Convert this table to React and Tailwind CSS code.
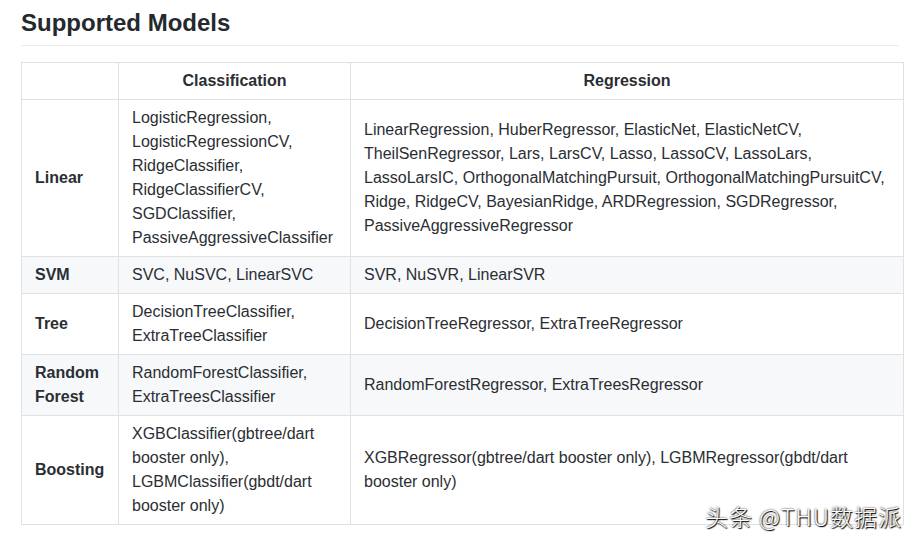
const rows = [
  {
    name: 'Linear',
    cls: [
      'LogisticRegression,',
      'LogisticRegressionCV,',
      'RidgeClassifier,',
      'RidgeClassifierCV,',
      'SGDClassifier,',
      'PassiveAggressiveClassifier',
    ],
    reg: 'LinearRegression, HuberRegressor, ElasticNet, ElasticNetCV, TheilSenRegressor, Lars, LarsCV, Lasso, LassoCV, LassoLars, LassoLarsIC, OrthogonalMatchingPursuit, OrthogonalMatchingPursuitCV, Ridge, RidgeCV, BayesianRidge, ARDRegression, SGDRegressor, PassiveAggressiveRegressor',
  },
  { name: 'SVM', cls: ['SVC, NuSVC, LinearSVC'], reg: 'SVR, NuSVR, LinearSVR' },
  {
    name: 'Tree',
    cls: ['DecisionTreeClassifier,', 'ExtraTreeClassifier'],
    reg: 'DecisionTreeRegressor, ExtraTreeRegressor',
  },
  {
    name: 'Random Forest',
    cls: ['RandomForestClassifier,', 'ExtraTreesClassifier'],
    reg: 'RandomForestRegressor, ExtraTreesRegressor',
  },
  {
    name: 'Boosting',
    cls: ['XGBClassifier(gbtree/dart', 'booster only),', 'LGBMClassifier(gbdt/dart', 'booster only)'],
    reg: 'XGBRegressor(gbtree/dart booster only), LGBMRegressor(gbdt/dart booster only)',
  },
]

export default function App() {
  const cell = 'border border-[#dfe2e5] px-[13px] py-[6px] align-middle'

  return (
    <div className="relative w-[922px] h-[545px] overflow-hidden bg-white text-[#2a2e33] font-['Liberation_Sans',Arial,sans-serif]">
      <div className="px-[21px] pt-[8px]">
        <h2 className="text-[24px] leading-[30px] font-bold pb-[7px] border-b border-[#eaecef] mr-[2px] text-[#24292e]">
          Supported Models
        </h2>
        <table className="mt-[16px] border-collapse table-fixed w-[882px] text-[16px] leading-[24px]">
          <colgroup>
            <col className="w-[97px]" />
            <col className="w-[232px]" />
            <col className="w-[553px]" />
          </colgroup>
          <thead>
            <tr className="bg-white">
              <th className={cell}></th>
              <th className={cell + ' text-center font-bold'}>Classification</th>
              <th className={cell + ' text-center font-bold'}>Regression</th>
            </tr>
          </thead>
          <tbody>
            {rows.map((r, idx) => (
              <tr key={r.name} className={idx % 2 == 1 ? 'bg-[#f6f8fa]' : 'bg-white'}>
                <td className={cell + ' font-bold text-left'}>{r.name}</td>
                <td className={cell}>
                  {r.cls.map((line) => (
                    <div key={line}>{line}</div>
                  ))}
                </td>
                <td className={cell}>{r.reg}</td>
              </tr>
            ))}
          </tbody>
        </table>
      </div>

      {/* watermark */}
      <div className="absolute left-[705px] top-[502px] text-[23px] leading-[29px] tracking-[1px] text-white whitespace-nowrap font-['Noto_Sans_CJK_SC','Noto_Sans',sans-serif] font-light [text-shadow:0_0_2px_#000,1px_1px_1px_#000]">
        头条 @THU数据派
      </div>
    </div>
  )
}
